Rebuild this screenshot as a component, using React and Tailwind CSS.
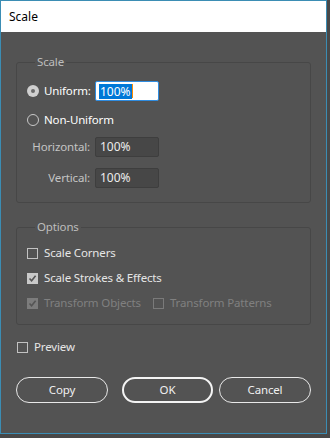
import React from "react";

const font = { fontFamily: '"Noto Sans", "Open Sans", sans-serif' };

function Radio({ checked }) {
  return checked ? (
    <span className="flex h-[12px] w-[12px] items-center justify-center rounded-full bg-[#cfcfcf]">
      <span className="h-[4px] w-[4px] rounded-full bg-[#6a6a6a]" />
    </span>
  ) : (
    <span className="block h-[12px] w-[12px] rounded-full border border-[#c8c8c8]" />
  );
}

function Check({ checked, disabled }) {
  if (checked) {
    return (
      <span
        className={
          "flex h-[11px] w-[11px] shrink-0 items-center justify-center " +
          (disabled ? "bg-[#7c7c7c]" : "bg-[#c9c9c9]")
        }
      >
        <svg width="9" height="9" viewBox="0 0 9 9">
          <path
            d="M1.5 4.5 L3.6 6.8 L7.6 1.8"
            fill="none"
            stroke="#555555"
            strokeWidth="1.6"
          />
        </svg>
      </span>
    );
  }
  return (
    <span
      className={
        "block h-[11px] w-[11px] shrink-0 border " +
        (disabled ? "border-[#7a7a7a]" : "border-[#c2c2c2]")
      }
    />
  );
}

function Field({ value }) {
  return (
    <div className="flex h-[20px] w-[64px] items-center rounded-[2px] border border-[#3e3e3e] bg-[#474747] pl-[4px] text-[12px] text-[#ececec]">
      {value}
    </div>
  );
}

const T = "text-[11.5px] tracking-[-0.15px]";

export default function App() {
  return (
    <div className="h-[438px] w-[330px] bg-[#484848]" style={font}>
      <div className="flex h-[434px] w-[327px] flex-col border border-[#3b8db4] bg-[#535353]">
        <div className="flex h-[31px] items-center bg-white pl-[8px] text-[12px] text-black">
          Scale
        </div>
        <div className="flex flex-col px-[15px] pt-[22px]">
          <fieldset className="rounded-[3px] border border-[#474747] pb-[14px] pl-[10px]">
            <legend className={"ml-[8px] px-[2px] leading-[16px] text-[#bdbdbd] " + T}>
              Scale
            </legend>
            <div className="mt-[11px] flex h-[20px] items-center">
              <Radio checked />
              <span className={"ml-[5px] w-[51px] text-white " + T}>Uniform:</span>
              <div className="flex h-[20px] w-[64px] items-center rounded-[2px] border border-[#2f8ce0] bg-white pl-[3px] text-[12px]">
                <span className="bg-[#0078d7] px-[1px] leading-[15px] text-white">100%</span>
                <span className="h-[14px] w-[1px] bg-[#ff8c00]" />
              </div>
            </div>
            <div className="mt-[11px] flex h-[16px] items-center">
              <Radio />
              <span className={"ml-[5px] text-white " + T}>Non-Uniform</span>
            </div>
            <div className="mt-[9px] flex h-[20px] items-center">
              <span className={"w-[68px] pr-[5px] text-right text-[#c4c4c4] " + T}>
                Horizontal:
              </span>
              <Field value="100%" />
            </div>
            <div className="mt-[11px] flex h-[20px] items-center">
              <span className={"w-[68px] pr-[5px] text-right text-[#c4c4c4] " + T}>
                Vertical:
              </span>
              <Field value="100%" />
            </div>
          </fieldset>

          <fieldset className="mt-[16px] rounded-[3px] border border-[#474747] pb-[13px] pl-[10px]">
            <legend className={"ml-[8px] px-[2px] leading-[16px] text-[#bdbdbd] " + T}>
              Options
            </legend>
            <div className="mt-[10px] flex h-[16px] items-center">
              <Check />
              <span className={"ml-[6px] text-[#e6e6e6] " + T}>Scale Corners</span>
            </div>
            <div className="mt-[9px] flex h-[16px] items-center">
              <Check checked />
              <span className={"ml-[6px] text-[#e6e6e6] " + T}>Scale Strokes &amp; Effects</span>
            </div>
            <div className="mt-[9px] flex h-[16px] items-center">
              <Check checked disabled />
              <span className={"ml-[6px] text-[#808080] " + T}>Transform Objects</span>
              <span className="ml-[12px] flex">
                <Check disabled />
              </span>
              <span className={"ml-[6px] text-[#808080] " + T}>Transform Patterns</span>
            </div>
          </fieldset>

          <div className="mt-[14px] flex h-[16px] items-center pl-[1px]">
            <Check />
            <span className={"ml-[6px] text-[#e6e6e6] " + T}>Preview</span>
          </div>

          <div className="mt-[22px] flex items-center">
            <button className={"flex h-[26px] w-[93px] items-center justify-center rounded-full border border-[#e8e8e8] text-[#f0f0f0] " + T}>
              Copy
            </button>
            <button className={"ml-[14px] flex h-[26px] w-[92px] items-center justify-center rounded-full border-2 border-[#f4f4f4] text-[#f0f0f0] " + T}>
              OK
            </button>
            <button className={"ml-[6px] flex h-[26px] w-[93px] items-center justify-center rounded-full border border-[#e8e8e8] text-[#f0f0f0] " + T}>
              Cancel
            </button>
          </div>
        </div>
      </div>
    </div>
  );
}
